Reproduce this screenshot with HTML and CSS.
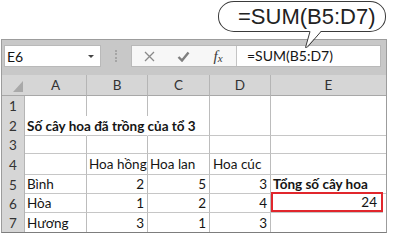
FILE: index.html
```html
<!DOCTYPE html>
<html lang="vi">
<head>
<meta charset="utf-8">
<title>SUM</title>
<link rel="stylesheet" href="styles.css">
</head>
<body>
<div class="page">
  <div class="callout">=SUM(B5:D7)
    <svg class="tail" width="24" height="20" viewBox="0 0 24 20">
      <polygon points="7,0 18,0 2.5,16.5" fill="#fff"/>
      <polyline points="7,0.5 2.5,16.5 4.5,16 18,0.5" fill="none" stroke="#3a3a3a" stroke-width="1"/>
    </svg>
  </div>
  <div class="excel">
    <div class="toolbar">
      <div class="namebox"><span class="ref">E6</span><span class="caret"></span></div>
      <div class="gripwrap"><span class="grip"></span></div>
      <div class="fbar">
        <div class="fbtns">
          <span class="btn"><svg width="11" height="11" viewBox="0 0 11 11"><path d="M1 1 L10 10 M10 1 L1 10" stroke="#8a8a8a" stroke-width="1.3" fill="none"/></svg></span>
          <span class="btn"><svg width="13" height="11" viewBox="0 0 13 11"><path d="M1.5 6 L5 9.5 L11.5 1.5" stroke="#7f7f7f" stroke-width="2.4" fill="none"/></svg></span>
          <span class="btn fx">f<span class="fxx">x</span></span>
        </div>
        <div class="finput">=SUM(B5:D7)</div>
      </div>
    </div>
    <div class="sheet">
      <div class="hd corner"><span class="tri"></span></div>
      <div class="hd">A</div><div class="hd">B</div><div class="hd">C</div><div class="hd">D</div><div class="hd last">E</div>

      <div class="rh">1</div>
      <div class="c nb"></div><div class="c nb"></div><div class="c nb"></div><div class="c nb"></div><div class="c nb last"></div>

      <div class="rh">2</div>
      <div class="c spill"><span class="b">Số cây hoa đã trồng của tổ 3</span></div><div class="c spill"></div><div class="c"></div><div class="c"></div><div class="c last"></div>

      <div class="rh">3</div>
      <div class="c"></div><div class="c"></div><div class="c"></div><div class="c"></div><div class="c last"></div>

      <div class="rh">4</div>
      <div class="c"></div><div class="c">Hoa hồng</div><div class="c">Hoa lan</div><div class="c pad">Hoa cúc</div><div class="c last"></div>

      <div class="rh">5</div>
      <div class="c">Bình</div><div class="c num">2</div><div class="c num">5</div><div class="c num">3</div><div class="c last b">Tổng số cây hoa</div>

      <div class="rh">6</div>
      <div class="c">Hòa</div><div class="c num">1</div><div class="c num">2</div><div class="c num">4</div><div class="c last num sel">24</div>

      <div class="rh">7</div>
      <div class="c nb">Hương</div><div class="c nb num">3</div><div class="c nb num">1</div><div class="c nb num">3</div><div class="c nb last"></div>
    </div>
  </div>
</div>
</body>
</html>
```
FILE: styles.css
```css
html, body {
  margin: 0;
  padding: 0;
  background: #fff;
}
.page {
  width: 393px;
  padding-top: 1px;
  font-family: Lato, "Noto Sans", sans-serif;
  color: #151515;
}
.callout {
  position: relative;
  z-index: 2;
  box-sizing: border-box;
  margin-left: 218px;
  width: 168px;
  height: 31px;
  border: 1px solid #3a3a3a;
  border-radius: 16px / 15px;
  background: #fff;
  padding-left: 19px;
  font-family: "Liberation Sans", Arial, sans-serif;
  font-size: 22px;
  line-height: 29px;
  color: #222;
  margin-bottom: 7px;
}
.tail {
  position: absolute;
  left: 84px;
  top: 29px;
  overflow: visible;
}
.excel {
  margin-left: 1px;
  width: 384px;
  border: 1px solid #9c9c9c;
  border-bottom-color: #7d7d7d;
  background: #c8c8c8;
}
.toolbar {
  display: flex;
  align-items: center;
  padding: 5px 0 8px 2px;
}
.namebox {
  box-sizing: border-box;
  width: 97px;
  height: 22px;
  background: #fff;
  border: 1px solid #b9b9b9;
  display: flex;
  align-items: center;
  justify-content: space-between;
  padding: 0 6px 0 2px;
  font-size: 14px;
}
.caret {
  width: 0;
  height: 0;
  border-left: 3px solid transparent;
  border-right: 3px solid transparent;
  border-top: 3px solid #444;
}
.gripwrap {
  width: 30px;
  display: flex;
  justify-content: center;
}
.grip {
  width: 0;
  height: 12px;
  border-left: 2px dotted #a5a5a5;
}
.fbar {
  box-sizing: border-box;
  width: 250px;
  height: 22px;
  display: flex;
  background: #fff;
  border: 1px solid #b9b9b9;
}
.fbtns {
  width: 104px;
  display: grid;
  grid-template-columns: 34px 35px 34px;
  align-items: center;
  justify-items: center;
  border-right: 1px solid #c4c4c4;
  background: #f7f7f7;
}
.btn {
  display: flex;
  align-items: center;
  justify-content: center;
}
.fx {
  font-family: "Liberation Serif", serif;
  font-style: italic;
  font-size: 15px;
  color: #3a3a3a;
}
.fxx {
  font-size: 11px;
  margin-top: 4px;
}
.finput {
  flex: 1;
  padding-left: 10px;
  font-size: 14px;
  line-height: 20px;
}
.sheet {
  display: grid;
  grid-template-columns: 23px 62px 61px 62px 61px 115px;
  grid-template-rows: 21px 20px 20px 18px 21px 19px 19px 19px;
  background: #fff;
  font-size: 13.5px;
}
.sheet > div {
  box-sizing: border-box;
  display: flex;
  align-items: center;
  white-space: nowrap;
}
.hd {
  background: #d6d6d6;
  justify-content: center;
  border-right: 1px solid #b5b5b5;
  border-bottom: 1px solid #a8a8a8;
  color: #333;
}
.corner {
  position: relative;
  border-right: none !important;
}
.tri {
  position: absolute;
  left: 11px;
  bottom: 3px;
  width: 0;
  height: 0;
  border-left: 10px solid transparent;
  border-bottom: 11px solid #a9a9a9;
}
.rh {
  background: #d6d6d6;
  justify-content: center;
  color: #333;
  border-right: 1px solid #b5b5b5;
}
.c {
  border-right: 1px solid #bcbcbc;
  border-bottom: 1px solid #c6c6c6;
  padding: 0 3px 0 2px;
}
.c.nb {
  border-bottom: none;
}
.c.last, .hd.last {
  border-right: none;
}
.c.spill {
  border-right-color: transparent;
  overflow: visible;
  position: relative;
  z-index: 1;
}
.c.num {
  justify-content: flex-end;
}
.c.pad {
  padding-left: 3px;
}
.b {
  font-weight: bold;
}
.c.sel {
  box-shadow: inset 0 0 0 2px #e1262c;
  margin-right: 3px;
  margin-top: -2px;
  padding-right: 6px;
}
```
